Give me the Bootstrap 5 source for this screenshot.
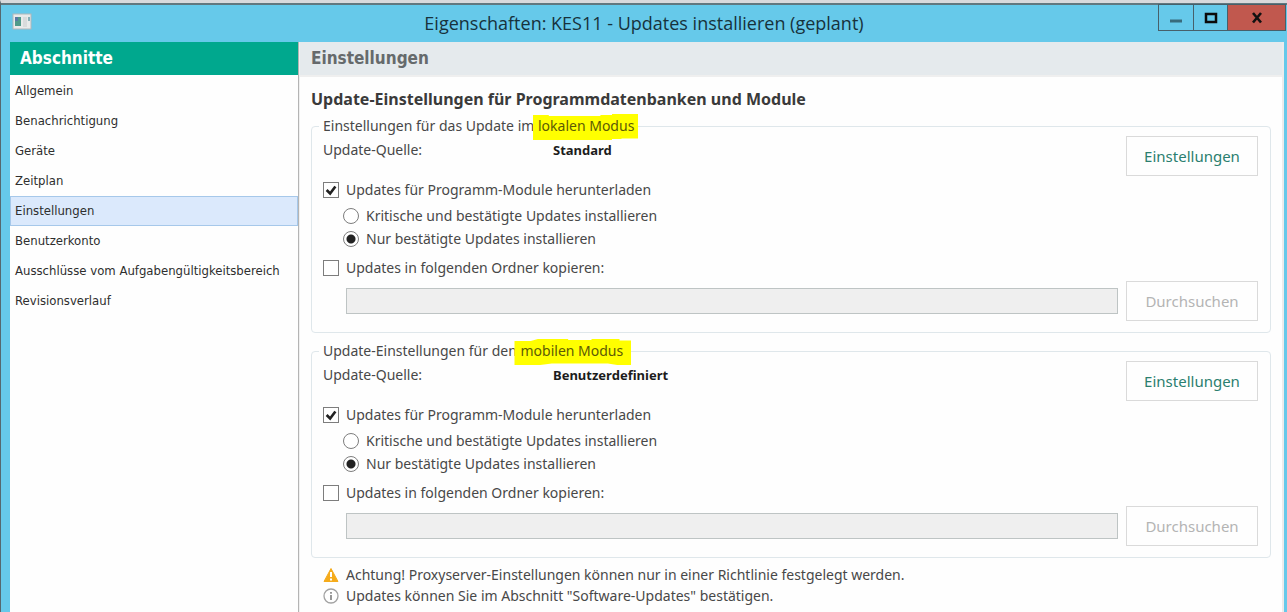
<!DOCTYPE html>
<html lang="de">
<head>
<meta charset="utf-8">
<meta name="viewport" content="width=device-width, initial-scale=1">
<title>Eigenschaften: KES11 - Updates installieren (geplant)</title>
<link href="https://cdn.jsdelivr.net/npm/bootstrap@5.3.0/dist/css/bootstrap.min.css" rel="stylesheet">
<style>
  body { font-family: "Noto Sans", sans-serif; font-size: 14px; line-height: 20px; color: #484848; background: #66c9ea; }
  .window { border-top: 3px solid #d9d9dc; border-left: 1px solid #55686f; background: #66c9ea; padding: 0 3px 0 9px; }
  .titlebar { height: 39px; border-top: 2px solid #62777f; margin-left: -9px; margin-right: -3px; position: relative; }
  .titlebar h1 { font-family: "Open Sans", sans-serif; font-size: 18px; line-height: 36px; color: #17323c; }
  .app-icon { position: absolute; left: 11px; top: 8px; }
  .caption-buttons { position: absolute; right: 1px; top: -1px; height: 27px; }
  .caption-buttons button { border: 1px solid #47606a; border-left-width: 0; background: transparent; padding: 0; width: 34px; display: flex; align-items: center; justify-content: center; }
  .caption-buttons button:first-child { border-left-width: 1px; width: 36px; }
  .caption-buttons .close-btn { background: #c1584e; width: 58px; }
  .sections { width: 289px; background: #fefefe; border-right: 1px solid #b4b4b4; }
  .pane-title { font-family: "DejaVu Sans Condensed", "DejaVu Sans", sans-serif; font-weight: 700; font-size: 17px; line-height: 33px; margin: 0; }
  .sections .pane-title { background: #00a88e; color: #fff; padding-left: 10px; }
  .sections .nav { padding-top: 1px; }
  .sections .nav-link { font-family: "DejaVu Sans Condensed", "DejaVu Sans", sans-serif; color: #2e2e2e; font-size: 13px; line-height: 28px; padding: 0 4px; border: 1px solid transparent; border-radius: 0; white-space: nowrap; }
  .sections .nav-link.active { color: #2e2e2e; background: #dbe9fc; border-color: #a6c8ea; }
  .main-pane { background: #fefefe; border-left: 1px solid #f0f0f0; border-right: 2px solid #ececec; }
  .main-pane .pane-title { background: #e5eaed; color: #666a6c; padding-left: 11px; border-bottom: 2px solid #efefef; }
  .content-area { padding: 10px 11px 6px 11px; }
  .content-area h3 { font-size: 16px; line-height: 24px; font-weight: 700; color: #3a3a3a; margin: 0 0 5px; }
  .group-box { border: 1px solid #dfe7eb; border-radius: 4px; padding: 0 12px 11px 11px; }
  .group-box + .group-box { margin-top: 8px; }
  .group-box legend { float: none; width: auto; font-size: 14px; line-height: 20px; margin: 0 0 0 -4px; padding: 0 4px; }
  .marker { position: relative; display: inline-block; color: #5c5a06; z-index: 0; }
  .marker::before { content: ""; position: absolute; z-index: -1; inset: -2px -4px -4px -5px; background: #ff0; clip-path: polygon(0 4%, 15% 4%, 15% 8%, 64% 8%, 64% 4%, 75% 4%, 75% 0, 100% 0, 100% 94%, 84% 94%, 84% 96%, 75% 96%, 75% 100%, 0 100%); }
  .marker-round::before { inset: -2px -8px -4px -6px; clip-path: polygon(0 8%, 14% 8%, 20% 0, 46% 0, 46% 4%, 66% 4%, 66% 0, 90% 0, 90% 6%, 100% 6%, 100% 100%, 88% 100%, 80% 94%, 32% 94%, 22% 100%, 0 100%); }
  .source-label { width: 230px; }
  .source-line { line-height: 28px; }
  .source-line strong { color: #1c1c1c; font-size: 13px; }
  .option { display: flex; align-items: center; gap: 7px; height: 28px; }
  .option-radio { height: 23px; padding-left: 20px; }
  .option-copy { height: 26px; margin-top: 5px; }
  .option .form-check-input { width: 16px; height: 16px; margin: 0; border: 1px solid #7d7d7d; border-radius: 0; background-color: #fff; box-shadow: none; flex: none; }
  .option .form-check-input[type=checkbox]:checked { background-image: url("data:image/svg+xml,%3Csvg xmlns='http://www.w3.org/2000/svg' viewBox='0 0 16 16'%3E%3Cpath d='M3 8l4 4 6-8' fill='none' stroke='%23222' stroke-width='3'/%3E%3C/svg%3E"); }
  .option .form-check-input[type=radio] { border-radius: 50%; }
  .option .form-check-input[type=radio]:checked { background-image: radial-gradient(circle, #222 0 4px, transparent 5px); background-size: auto; }
  .folder-field { height: 26px; margin-left: 23px; border: 1px solid #bec4c4; border-radius: 0; background: #efefef; padding: 0 6px; font-size: 14px; width: auto; }
  .folder-field:disabled { background: #efefef; }
  .action-btn { width: 132px; height: 40px; flex: none; border: 1px solid #dadada; border-radius: 0; background: #fefefe; color: #2b7f6f; font-size: 15px; line-height: 24px; padding: 0; }
  .action-btn:disabled { color: #b4b4b4; border-color: #dadada; background: #fefefe; opacity: 1; }
  .hints { padding: 6px 0 0 12px; }
  .hint { gap: 7px; line-height: 21px; }
</style>
</head>
<body>
<div class="window d-flex flex-column min-vh-100">
  <header class="titlebar">
    <svg class="app-icon" width="20" height="17" viewBox="0 0 20 17" aria-hidden="true">
      <rect x="1" y="1" width="18" height="15" fill="#e9eaea" stroke="#b0b7ba"/>
      <rect x="3" y="4" width="6" height="9" fill="#4f9a8a"/><rect x="3" y="4" width="3" height="4" fill="#5879a5"/>
      <rect x="11" y="4" width="4" height="10" fill="#d9dbdc"/><rect x="16" y="4" width="2" height="4" fill="#87b0b8"/>
    </svg>
    <h1 class="text-center m-0">Eigenschaften: KES11 - Updates installieren (geplant)</h1>
    <div class="caption-buttons d-flex">
      <button type="button" aria-label="Minimieren"><svg width="14" height="14"><path d="M1 8.500h12v3H1z" fill="#386b7d"/></svg></button>
      <button type="button" aria-label="Maximieren"><svg width="14" height="12"><rect x="2" y="2" width="10" height="8" fill="none" stroke="#0b0b0b" stroke-width="2.500"/></svg></button>
      <button type="button" class="close-btn" aria-label="Schließen"><svg width="12" height="12"><path d="M2 1l8 9.500M10 1L2 10.500" stroke="#111" stroke-width="2.600"/></svg></button>
    </div>
  </header>
  <div class="d-flex flex-grow-1">
    <aside class="sections flex-shrink-0">
      <h2 class="pane-title">Abschnitte</h2>
      <nav class="nav flex-column">
        <a class="nav-link" href="#">Allgemein</a>
        <a class="nav-link" href="#">Benachrichtigung</a>
        <a class="nav-link" href="#">Geräte</a>
        <a class="nav-link" href="#">Zeitplan</a>
        <a class="nav-link active" aria-current="page" href="#">Einstellungen</a>
        <a class="nav-link" href="#">Benutzerkonto</a>
        <a class="nav-link" href="#">Ausschlüsse vom Aufgabengültigkeitsbereich</a>
        <a class="nav-link" href="#">Revisionsverlauf</a>
      </nav>
    </aside>
    <main class="main-pane flex-grow-1">
      <h2 class="pane-title">Einstellungen</h2>
      <form class="content-area">
        <h3>Update-Einstellungen für Programmdatenbanken und Module</h3>
        <fieldset class="group-box">
          <legend>Einstellungen für das Update im <span class="marker">lokalen Modus</span></legend>
          <div class="d-flex justify-content-between">
            <div class="source-line d-flex"><span class="source-label">Update-Quelle:</span><strong>Standard</strong></div>
            <button type="button" class="btn action-btn">Einstellungen</button>
          </div>
          <div class="option"><input class="form-check-input" type="checkbox" id="l-mod" checked><label for="l-mod">Updates für Programm-Module herunterladen</label></div>
          <div class="option option-radio"><input class="form-check-input" type="radio" name="l" id="l-crit"><label for="l-crit">Kritische und bestätigte Updates installieren</label></div>
          <div class="option option-radio"><input class="form-check-input" type="radio" name="l" id="l-appr" checked><label for="l-appr">Nur bestätigte Updates installieren</label></div>
          <div class="option option-copy"><input class="form-check-input" type="checkbox" id="l-copy"><label for="l-copy">Updates in folgenden Ordner kopieren:</label></div>
          <div class="d-flex align-items-center gap-2">
            <input type="text" class="form-control folder-field flex-grow-1" aria-label="Ordner" disabled>
            <button type="button" class="btn action-btn" disabled>Durchsuchen</button>
          </div>
        </fieldset>
        <fieldset class="group-box">
          <legend>Update-Einstellungen für den <span class="marker marker-round">mobilen Modus</span></legend>
          <div class="d-flex justify-content-between">
            <div class="source-line d-flex"><span class="source-label">Update-Quelle:</span><strong>Benutzerdefiniert</strong></div>
            <button type="button" class="btn action-btn">Einstellungen</button>
          </div>
          <div class="option"><input class="form-check-input" type="checkbox" id="m-mod" checked><label for="m-mod">Updates für Programm-Module herunterladen</label></div>
          <div class="option option-radio"><input class="form-check-input" type="radio" name="m" id="m-crit"><label for="m-crit">Kritische und bestätigte Updates installieren</label></div>
          <div class="option option-radio"><input class="form-check-input" type="radio" name="m" id="m-appr" checked><label for="m-appr">Nur bestätigte Updates installieren</label></div>
          <div class="option option-copy"><input class="form-check-input" type="checkbox" id="m-copy"><label for="m-copy">Updates in folgenden Ordner kopieren:</label></div>
          <div class="d-flex align-items-center gap-2">
            <input type="text" class="form-control folder-field flex-grow-1" aria-label="Ordner" disabled>
            <button type="button" class="btn action-btn" disabled>Durchsuchen</button>
          </div>
        </fieldset>
        <div class="hints">
          <div class="hint d-flex align-items-center"><svg width="16" height="16" viewBox="0 0 16 16" aria-hidden="true"><path d="M8 1.500L15 14.500H1z" fill="#f5ab1b" stroke="#f5ab1b" stroke-linejoin="round"/><path d="M8 5v5M8 11.500v2" stroke="#fff" stroke-width="2"/></svg><span>Achtung! Proxyserver-Einstellungen können nur in einer Richtlinie festgelegt werden.</span></div>
          <div class="hint d-flex align-items-center"><svg width="16" height="16" viewBox="0 0 16 16" aria-hidden="true"><circle cx="8" cy="8" r="7" fill="none" stroke="#a2a2a2" stroke-width="1.300"/><path d="M8 7v5M8 4v1.800" stroke="#8c8c8c" stroke-width="1.800"/></svg><span>Updates können Sie im Abschnitt "Software-Updates" bestätigen.</span></div>
        </div>
      </form>
    </main>
  </div>
</div>
<script src="https://cdn.jsdelivr.net/npm/bootstrap@5.3.0/dist/js/bootstrap.bundle.min.js"></script>
</body>
</html>
